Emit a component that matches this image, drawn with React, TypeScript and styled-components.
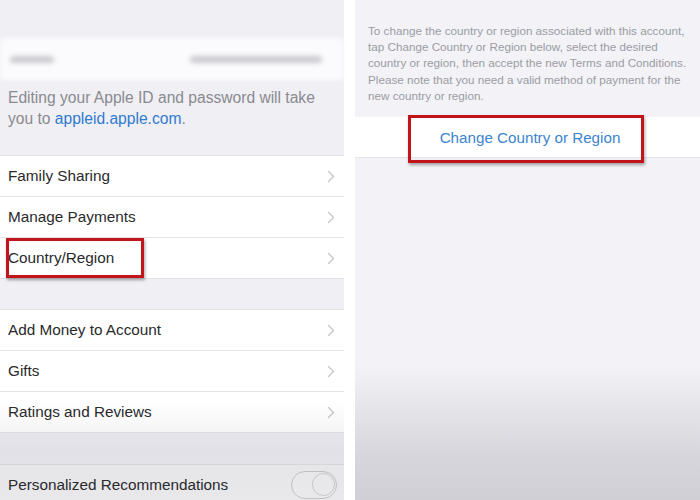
import React from "react";
import styled, { createGlobalStyle } from "styled-components";

const Global = createGlobalStyle`
  html, body { margin: 0; padding: 0; background: #ffffff; }
  body { font-family: "Liberation Sans", Arial, sans-serif; -webkit-font-smoothing: antialiased; }
`;

const Page = styled.div`
  width: 700px;
  height: 500px;
  display: flex;
  gap: 11px;
  overflow: hidden;
  background: #ffffff;
`;

const LeftPanel = styled.div`
  position: relative;
  width: 344px;
  flex: none;
  display: flex;
  flex-direction: column;
  background: #efeff4;
  &::after {
    content: "";
    position: absolute;
    inset: 0;
    pointer-events: none;
    background: linear-gradient(to bottom, rgba(0,0,0,0) 0%, rgba(0,0,0,0) 80%, rgba(40,40,60,0.07) 90%, rgba(40,40,60,0.05) 100%);
  }
`;

const RightPanel = styled.div`
  flex: 1;
  display: flex;
  flex-direction: column;
  background: linear-gradient(to bottom, #f2f2f7 0%, #f2f2f7 73%, #e4e4e9 82%, #d6d6dc 91%, #cfcfd5 100%);
`;

const Spacer = styled.div<{ $h: number }>`
  height: ${(p) => p.$h}px;
  flex: none;
`;

const BlurRow = styled.div`
  height: 42px;
  flex: none;
  background: #fbfbfd;
  display: flex;
  align-items: center;
  justify-content: space-between;
  padding: 0 22px 0 10px;
  filter: blur(2.5px);
`;

const BlurText = styled.span<{ $w: number }>`
  display: inline-block;
  width: ${(p) => p.$w}px;
  height: 7px;
  border-radius: 4px;
  background: #cacacf;
`;

const Footer = styled.p`
  margin: 0;
  flex: none;
  height: 75px;
  box-sizing: border-box;
  padding: 7px 8px 0 8px;
  font-size: 15.6px;
  line-height: 21px;
  color: #8a8a90;
`;

const Link = styled.span`
  color: #2f7bd0;
`;

const Group = styled.div`
  flex: none;
  background: #ffffff;
  border-top: 1px solid #e2e2e6;
  border-bottom: 1px solid #e2e2e6;
`;

const Row = styled.div<{ $first?: boolean; $dim?: boolean }>`
  position: relative;
  height: 40px;
  display: flex;
  align-items: center;
  justify-content: space-between;
  padding: 0 9px 0 8px;
  background: ${(p) => (p.$dim ? "#f3f3f5" : "#ffffff")};
  border-top: ${(p) => (p.$first ? "none" : "1px solid #e4e4e8")};
  font-size: 15.3px;
  color: #2a2a2c;
`;

const Chevron = styled.svg`
  width: 8px;
  height: 13px;
  flex: none;
`;

const Highlight = styled.div<{ $l: number; $t: number; $w: number; $h: number }>`
  position: absolute;
  left: ${(p) => p.$l}px;
  top: ${(p) => p.$t}px;
  width: ${(p) => p.$w}px;
  height: ${(p) => p.$h}px;
  box-sizing: border-box;
  border: 3px solid #c2141b;
  box-shadow: 1px 2px 3px rgba(0,0,0,0.35), inset 0 0 1px rgba(0,0,0,0.2);
  pointer-events: none;
`;

const Toggle = styled.div`
  width: 46px;
  height: 28px;
  box-sizing: border-box;
  border-radius: 14px;
  border: 1.5px solid #c9c9cd;
  background: #f4f4f6;
  position: relative;
  margin-right: -2px;
  &::after {
    content: "";
    position: absolute;
    right: 1px;
    top: 1px;
    width: 23px;
    height: 23px;
    border-radius: 50%;
    border: 1px solid #cfcfd3;
    box-sizing: border-box;
  }
`;

const Description = styled.p`
  margin: 0;
  flex: none;
  height: 117px;
  box-sizing: border-box;
  padding: 23px 12px 0 13px;
  font-size: 11.7px;
  line-height: 16.2px;
  color: #9c9ca2;
`;

const ButtonRow = styled.div`
  position: relative;
  height: 40px;
  flex: none;
  background: #ffffff;
  border-bottom: 1px solid #e4e4e8;
  display: flex;
  align-items: center;
  justify-content: center;
  padding-left: 5px;
  font-size: 15.2px;
  color: #3b84cf;
`;

const chevron = (
  <Chevron viewBox="0 0 8 13">
    <path d="M1.5 1.5 L6.5 6.5 L1.5 11.5" fill="none" stroke="#c7c7cc" strokeWidth="1.4" strokeLinecap="round" strokeLinejoin="round" />
  </Chevron>
);

export default function App() {
  return (
    <>
      <Global />
      <Page>
        <LeftPanel>
          <Spacer $h={38} />
          <BlurRow>
            <BlurText $w={44} />
            <BlurText $w={132} />
          </BlurRow>
          <Footer>
            Editing your Apple ID and password will take you to <Link>appleid.apple.com</Link>.
          </Footer>
          <Group>
            <Row $first>
              Family Sharing
              {chevron}
            </Row>
            <Row>
              Manage Payments
              {chevron}
            </Row>
            <Row>
              Country/Region
              {chevron}
              <Highlight $l={6} $t={0} $w={138} $h={40} />
            </Row>
          </Group>
          <Spacer $h={30} />
          <Group>
            <Row $first>
              Add Money to Account
              {chevron}
            </Row>
            <Row>
              Gifts
              {chevron}
            </Row>
            <Row>
              Ratings and Reviews
              {chevron}
            </Row>
          </Group>
          <Spacer $h={31} />
          <Group>
            <Row $first $dim>
              Personalized Recommendations
              <Toggle />
            </Row>
          </Group>
        </LeftPanel>
        <RightPanel>
          <Description>
            To change the country or region associated with this account, tap Change Country or Region below, select the desired country or region, then accept the new Terms and Conditions. Please note that you need a valid method of payment for the new country or region.
          </Description>
          <ButtonRow>
            Change Country or Region
            <Highlight $l={53} $t={-2} $w={236} $h={48} />
          </ButtonRow>
        </RightPanel>
      </Page>
    </>
  );
}
